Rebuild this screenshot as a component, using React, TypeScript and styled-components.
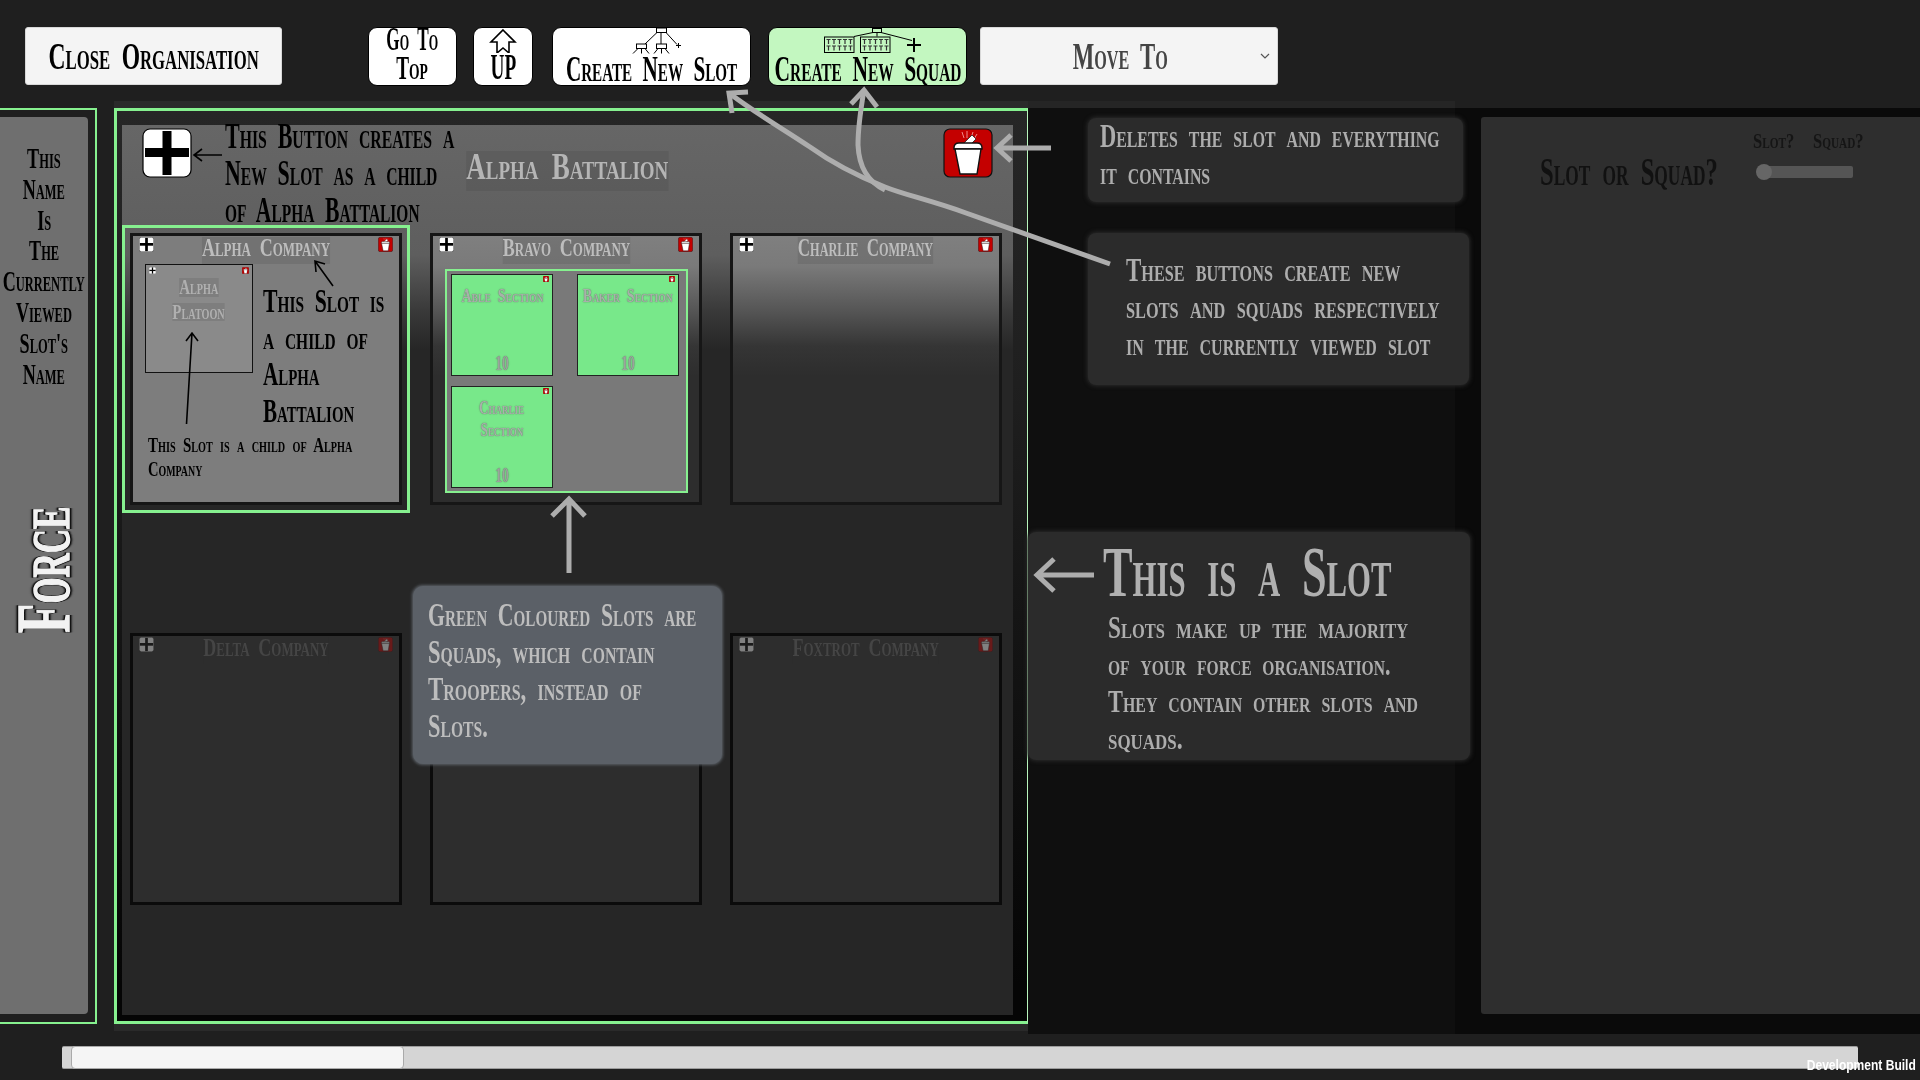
import type { ReactNode } from "react";
import styled, { createGlobalStyle } from "styled-components";

const green = "#86f08f";

const GlobalStyle = createGlobalStyle`
  html, body {
    margin: 0;
    padding: 0;
    background: #1f1f1f;
    overflow: hidden;
  }
`;

const Label = styled.span<{ $size: number; $sx: number; $color?: string; $origin?: string; $shade?: boolean; $glow?: boolean }>`
  display: inline-block;
  font-family: "Liberation Serif", "Times New Roman", serif;
  font-variant: small-caps;
  font-weight: 700;
  white-space: nowrap;
  word-spacing: 0.24em;
  font-size: ${(p) => p.$size}px;
  line-height: 0.85;
  color: ${(p) => p.$color ?? "#000"};
  background: ${(p) => (p.$shade ? "rgba(50, 50, 50, 0.13)" : "transparent")};
  text-shadow: ${(p) => (p.$glow ? "0 0 1.5px #555" : "none")};
  transform: scaleX(${(p) => p.$sx});
  transform-origin: ${(p) => p.$origin ?? "center"};
`;

const Page = styled.div`
  position: relative;
  width: 1920px;
  height: 1080px;
  overflow: hidden;
  background: #1f1f1f;
`;

const TopBar = styled.div`
  display: flex;
  height: 74px;
  padding: 27px 0 0 25px;
  align-items: flex-start;
`;

const PlainButton = styled.div<{ $width: number; $gap: number; $inset?: number }>`
  display: flex;
  align-items: center;
  justify-content: center;
  box-sizing: border-box;
  position: relative;
  width: ${(p) => p.$width}px;
  height: 58px;
  margin-right: ${(p) => p.$gap}px;
  padding-right: ${(p) => p.$inset ?? 0}px;
  background: #f4f4f4;
  border: 1px solid #d8d8d8;
  border-radius: 3px;
`;

const ToolButton = styled.div<{ $width: number; $gap: number; $active?: boolean }>`
  display: flex;
  flex-direction: column;
  align-items: center;
  box-sizing: border-box;
  width: ${(p) => p.$width}px;
  height: 59px;
  margin-right: ${(p) => p.$gap}px;
  background: ${(p) => (p.$active ? "#c3f7c0" : "#fff")};
  border: 1.5px solid #000;
  border-radius: 9px;
`;

const ToolRow = styled.div<{ $top?: number }>`
  display: flex;
  justify-content: center;
  width: 100%;
  height: 29px;
  align-items: center;
  margin-top: ${(p) => p.$top ?? 0}px;
`;

const IconSlot = styled.svg<{ $shift?: number }>`
  display: block;
  flex: none;
  margin-left: ${(p) => p.$shift ?? 0}px;
`;

const Workspace = styled.div`
  display: flex;
  height: 933px;
`;

const SideColumn = styled.div`
  width: 97px;
  height: 916px;
  margin: 7px 17px 0 0;
  box-sizing: border-box;
  border: solid ${green};
  border-width: 2.5px 2.5px 2.5px 0;
  padding-top: 7px;
`;

const SideInner = styled.div`
  display: flex;
  flex-direction: column;
  align-items: center;
  width: 88px;
  height: 897px;
  padding-top: 26px;
  box-sizing: border-box;
  background: #6f6f6f;
  border-radius: 0 4px 4px 0;
`;

const SideLine = styled.div`
  height: 30.8px;
  display: flex;
  align-items: center;
  justify-content: center;
  width: 88px;
`;

const ForceWord = styled.div`
  margin: 81px 3px 0 0;
  font-family: "Liberation Serif", serif;
  font-variant: small-caps;
  font-weight: 700;
  font-size: 76px;
  line-height: 1;
  writing-mode: vertical-rl;
  color: #f2f2f2;
  -webkit-text-stroke: 1.5px #f2f2f2;
  filter: drop-shadow(0 0 1px #000) drop-shadow(0 0 1px #000) drop-shadow(0 0 1px #000);
  transform: rotate(180deg) scaleY(0.633);
`;

const MainBand = styled.div`
  width: 914px;
  height: 930px;
  padding-top: 7px;
  box-sizing: border-box;
  background: #2a2a2a;
`;

const MainFrame = styled.div`
  width: 914px;
  height: 916px;
  box-sizing: border-box;
  border: solid ${green};
  border-width: 3px 1.5px 3px 3px;
  border-right-color: #b8f5bc;
  padding: 14px 14px 6px 5px;
  background: linear-gradient(#262626, #1f1f1f 30%, #050505 96%);
`;

const MainInner = styled.div`
  height: 890px;
  background: linear-gradient(#666 0, #5e5e5e 130px, #3a3a3a 185px, #262626 225px, #262626 100%);
`;

const PanelHeader = styled.div`
  display: grid;
  grid-template-columns: 1fr auto 1fr;
  height: 108px;
  padding: 3px 20px 0;
  box-sizing: border-box;
`;

const HeaderTitle = styled.div`
  display: flex;
  justify-content: center;
  padding: 23px 1px 0 0;
  height: 40px;
`;

const HeaderEnd = styled.div`
  display: flex;
  justify-content: flex-end;
`;

const SlotGrid = styled.div`
  display: grid;
  grid-template-columns: repeat(3, 272px);
  grid-auto-rows: 272px;
  column-gap: 28px;
  row-gap: 128px;
  margin-left: 8px;
`;

const Card = styled.div<{ $tone: "selected" | "faded" | "dim" }>`
  box-sizing: border-box;
  border: 3px solid ${(p) => (p.$tone === "dim" ? "#0b0b0b" : "#161616")};
  outline: ${(p) => (p.$tone === "selected" ? `3px solid ${green}` : "none")};
  outline-offset: 5px;
  background: ${(p) =>
    p.$tone === "selected"
      ? "#7d7d7d"
      : p.$tone === "faded"
        ? "linear-gradient(#7f7f7f 0, #7a7a7a 30px, #555 75px, #353535 110px, #2d2d2d 140px)"
        : "#2d2d2d"};
`;

const CardHeader = styled.div`
  display: grid;
  grid-template-columns: 15px 1fr 15px;
  height: 27px;
  padding: 1px 6px 0;
`;

const CardTitle = styled.div`
  display: flex;
  justify-content: center;
`;

const DimWrap = styled.div<{ $dim: boolean }>`
  opacity: ${(p) => (p.$dim ? 0.4 : 1)};
`;

const CardBody = styled.div<{ $top: number }>`
  padding: ${(p) => p.$top}px 0 0 12px;
`;

const MiniSlot = styled.div`
  width: 108px;
  height: 109px;
  box-sizing: border-box;
  border: 1px solid #111;
  background: #8a8a8a;
`;

const MiniIcons = styled.div`
  display: flex;
  justify-content: space-between;
  padding: 2px 3px;
`;

const MiniLines = styled.div`
  display: flex;
  flex-direction: column;
  align-items: center;
  padding-top: 2px;
  gap: 6px;
`;

const SquadBox = styled.div`
  display: grid;
  grid-template-columns: repeat(2, 102px);
  grid-auto-rows: 102px;
  column-gap: 24px;
  row-gap: 10px;
  width: 243px;
  height: 224px;
  box-sizing: border-box;
  padding: 3px 4px;
  border: 2.5px solid ${green};
  background: #797979;
`;

const SquadCard = styled.div`
  display: flex;
  flex-direction: column;
  align-items: center;
  box-sizing: border-box;
  border: 1.5px solid #222;
  background: #78e88a;
`;

const SquadTrash = styled.div`
  align-self: flex-end;
  height: 7px;
  margin: 1px 3px 0 0;
`;

const SquadLabel = styled.div`
  display: flex;
  flex-direction: column;
  align-items: center;
  gap: 6px;
  padding-top: 5px;
`;

const SquadCount = styled.div`
  margin-top: auto;
  padding-bottom: 1px;
`;

const RightRegion = styled.div`
  display: flex;
  flex: 1;
  height: 933px;
  background:
    linear-gradient(#252525, #252525) 0 0 / 427px 7px no-repeat,
    linear-gradient(#1f1f1f, #1f1f1f) 0 0 / 100% 7px no-repeat,
    linear-gradient(to right, #0f0f0f 427px, #0a0a0a 427px);
`;

const InfoColumn = styled.div`
  display: flex;
  flex-direction: column;
  align-items: flex-start;
  width: 453px;
  padding-top: 17px;
`;

const InfoBox = styled.div<{ $left: number; $top: number; $width: number; $height: number; $pad: string }>`
  box-sizing: border-box;
  margin: ${(p) => p.$top}px 0 0 ${(p) => p.$left}px;
  width: ${(p) => p.$width}px;
  height: ${(p) => p.$height}px;
  padding: ${(p) => p.$pad};
  background: #2b2b2b;
  border-radius: 8px;
  box-shadow: 0 0 4px 1px #2b2b2b;
`;

const SlotInfoBody = styled.div`
  margin: 6px 0 0 5px;
`;

const TextLine = styled.div<{ $height?: number }>`
  display: flex;
  align-items: center;
  height: ${(p) => p.$height ?? 37}px;
`;

const SettingsPanel = styled.div`
  position: relative;
  flex: 1;
  height: 897px;
  margin-top: 16px;
  background: #2e2e2e;
  border-radius: 3px 0 0 3px;
`;

const SlotSquadRow = styled.div`
  display: flex;
  align-items: center;
  padding: 39px 0 0 59px;
  height: 30px;
`;

const ToggleColumn = styled.div`
  position: absolute;
  left: 272px;
  top: 15px;
  width: 120px;
`;

const ToggleLabels = styled.div`
  display: grid;
  grid-template-columns: 60px auto;
  height: 22px;
`;

const ToggleTrack = styled.div`
  position: relative;
  width: 93px;
  height: 12px;
  margin: 12px 0 0 7px;
  background: #555;
  border-radius: 2px;
`;

const ToggleThumb = styled.div`
  position: absolute;
  left: -4px;
  top: -2px;
  width: 16px;
  height: 16px;
  border-radius: 50%;
  background: #666;
`;

const ScrollTrack = styled.div`
  position: relative;
  width: 1796px;
  height: 23px;
  margin: 12px 0 0 62px;
  box-sizing: border-box;
  background: #d5d5d5;
  border: solid #9c9c9c;
  border-width: 1px 0;
  border-radius: 2px;
`;

const ScrollThumb = styled.div`
  position: absolute;
  left: 9px;
  top: -1px;
  width: 333px;
  height: 23px;
  box-sizing: border-box;
  background: #f5f5f5;
  border: 1px solid #aaa;
  border-radius: 4px;
`;

const DevBuild = styled.div`
  position: absolute;
  right: 4px;
  bottom: 7px;
  font-family: "Liberation Sans", Arial, sans-serif;
  font-weight: 700;
  font-size: 14px;
  color: #fff;
  white-space: nowrap;
  transform: scaleX(0.86);
  transform-origin: right;
`;

const Note = styled.div<{ $x: number; $y: number }>`
  position: absolute;
  left: ${(p) => p.$x}px;
  top: ${(p) => p.$y}px;
`;

const TipBox = styled.div`
  position: absolute;
  left: 413px;
  top: 586px;
  width: 309px;
  height: 178px;
  box-sizing: border-box;
  padding: 11px 0 0 15px;
  background: #5b6067;
  border-radius: 10px;
  box-shadow: 0 0 3px 1px #5b6067;
`;

const Overlay = styled.svg`
  position: absolute;
  left: 0;
  top: 0;
  pointer-events: none;
`;

function PlusIcon({ size }: { size: number }) {
  return (
    <IconSlot width={size} height={size} viewBox="0 0 50 50">
      <rect x="1" y="1" width="48" height="48" rx="7" fill="#fff" stroke="#000" strokeWidth="1.2" />
      <rect x="20.5" y="3" width="9" height="44" fill="#000" />
      <rect x="3" y="20" width="44" height="9" fill="#000" />
    </IconSlot>
  );
}

function TrashIcon({ size }: { size: number }) {
  return (
    <IconSlot width={size} height={size} viewBox="0 0 50 50">
      <rect x="1" y="1" width="48" height="48" rx="6" fill="#c40000" stroke="#111" strokeWidth="1.2" />
      <path d="M19 4l2 6M24 3v7M30 4l-2 6M34 6l-3 5" stroke="#e88" strokeWidth="1" fill="none" />
      <path d="M19 17L29 7l4 4-9 9z" fill="#fff" stroke="#222" strokeWidth="0.8" />
      <path d="M11 20c0-3 2-5 5-5h18c3 0 5 2 5 5v1H11z" fill="#fff" stroke="#111" strokeWidth="1.4" />
      <path d="M12 21h26l-4 25H17z" fill="#fff" stroke="#111" strokeWidth="1.4" />
    </IconSlot>
  );
}

function SlotIcon() {
  return (
    <IconSlot $shift={12} width="55" height="27" viewBox="0 1.5 55 27" fill="none" stroke="#000" strokeWidth="1">
      <rect x="26.5" y="1.5" width="10" height="4.5" fill="#fff" />
      <path d="M27 6L15 17.5M31 6v11.5M36 6l11 12" />
      <rect x="6.5" y="17.5" width="10" height="4.5" fill="#fff" />
      <rect x="26.5" y="17.5" width="10" height="4.5" fill="#fff" />
      <path d="M8 22l-5 5M11.5 22v5M15 22l4 5M28 22l-4 5M31.5 22v5M35 22l4 5" />
      <path d="M46 19h5M48.5 16.5v5" />
    </IconSlot>
  );
}

const TROOP_X = [4, 9.5, 15, 20.5, 26];

function TroopBox({ x }: { x: number }) {
  return (
    <g transform={`translate(${x} 11)`}>
      <rect x="0.5" y="0.5" width="29.5" height="15.5" fill="none" stroke="#000" />
      {[3, 9.5].map((y) =>
        TROOP_X.map((tx) => (
          <path key={`${tx}-${y}`} d={`M${tx - 1.5} ${y}h4M${tx + 0.5} ${y}v4.5`} stroke="#333" strokeWidth="1.2" />
        ))
      )}
    </g>
  );
}

function SquadIcon() {
  return (
    <IconSlot $shift={7} width="102" height="27" viewBox="0 2.5 102 27" fill="none">
      <TroopBox x={4} />
      <TroopBox x={40} />
      <rect x="52.5" y="3" width="9" height="4" stroke="#000" />
      <path d="M53 7L34 11M57 7V11M61 7L92 15" stroke="#000" />
      <path d="M87 19.5h14M94 12.5v14" stroke="#000" strokeWidth="2" />
    </IconSlot>
  );
}

function Lines({ lines, x, y, size, height }: {
  lines: [string, number][];
  x: number;
  y: number;
  size: number;
  height?: number;
}) {
  return (
    <Note $x={x} $y={y}>
      {lines.map(([text, sx]) => (
        <TextLine key={text} $height={height}>
          <Label $size={size} $sx={sx} $origin="left">
            {text}
          </Label>
        </TextLine>
      ))}
    </Note>
  );
}

function Copy({ text, size, sx, color = "#adadad", height }: {
  text: string;
  size: number;
  sx: number;
  color?: string;
  height?: number;
}) {
  return (
    <TextLine $height={height}>
      <Label $size={size} $sx={sx} $color={color} $origin="left">{text}</Label>
    </TextLine>
  );
}

function Dimmed({ on, children }: { on: boolean; children: ReactNode }) {
  return <DimWrap $dim={on}>{children}</DimWrap>;
}

type SlotCard = { name: string; sx: number; tone: "selected" | "faded" | "dim" };

const slotCards: SlotCard[] = [
  { name: "Alpha Company", sx: 0.72, tone: "selected" },
  { name: "Bravo Company", sx: 0.72, tone: "faded" },
  { name: "Charlie Company", sx: 0.68, tone: "faded" },
  { name: "Delta Company", sx: 0.72, tone: "dim" },
  { name: "Echo Company", sx: 0.72, tone: "dim" },
  { name: "Foxtrot Company", sx: 0.72, tone: "dim" },
];

const squads = [
  { lines: ["Able Section"], sx: 0.74 },
  { lines: ["Baker Section"], sx: 0.74 },
  { lines: ["Charlie", "Section"], sx: 0.69 },
];

function SlotCardView({ card, index }: { card: SlotCard; index: number }) {
  const dim = card.tone === "dim";
  return (
    <Card $tone={card.tone}>
      <CardHeader>
        <Dimmed on={dim}>
          <PlusIcon size={15} />
        </Dimmed>
        <CardTitle>
          {index !== 4 && (
            <Label $size={25} $sx={card.sx} $color={dim ? "#454545" : "#bdbdbd"} $shade>
              {card.name}
            </Label>
          )}
        </CardTitle>
        <Dimmed on={dim}>
          <TrashIcon size={15} />
        </Dimmed>
      </CardHeader>
      {index === 0 && (
        <CardBody $top={0}>
          <MiniSlot>
            <MiniIcons>
              <PlusIcon size={7} />
              <TrashIcon size={7} />
            </MiniIcons>
            <MiniLines>
              <Label $size={22} $sx={0.68} $color="#b0b0b0" $shade>Alpha</Label>
              <Label $size={22} $sx={0.68} $color="#b0b0b0" $shade>Platoon</Label>
            </MiniLines>
          </MiniSlot>
        </CardBody>
      )}
      {index === 1 && (
        <CardBody $top={5}>
          <SquadBox>
            {squads.map((squad) => (
              <SquadCard key={squad.lines[0]}>
                <SquadTrash>
                  <TrashIcon size={6} />
                </SquadTrash>
                <SquadLabel>
                  {squad.lines.map((line) => (
                    <Label key={line} $size={19} $sx={squad.sx} $color="#a8b2aa" $glow>
                      {line}
                    </Label>
                  ))}
                </SquadLabel>
                <SquadCount>
                  <Label $size={22} $sx={0.62} $color="#9aa69c" $glow>10</Label>
                </SquadCount>
              </SquadCard>
            ))}
          </SquadBox>
        </CardBody>
      )}
    </Card>
  );
}

export default function App() {
  const sideLines = ["This", "Name", "Is", "The", "Currently", "Viewed", "Slot's", "Name"];

  return (
    <Page>
      <GlobalStyle />
      <TopBar>
        <PlainButton $width={257} $gap={86}>
          <Label $size={38} $sx={0.62}>Close Organisation</Label>
        </PlainButton>
        <ToolButton $width={89} $gap={16}>
          <ToolRow $top={-3}><Label $size={34} $sx={0.505}>Go To</Label></ToolRow>
          <ToolRow><Label $size={34} $sx={0.565}>Top</Label></ToolRow>
        </ToolButton>
        <ToolButton $width={60} $gap={19}>
          <IconSlot width="30" height="25" viewBox="0 1 30 25" fill="#fff" stroke="#000" strokeWidth="1.6">
            <path d="M15 3L27 15H21V26L15 21L9 26V15H3z" />
          </IconSlot>
          <ToolRow><Label $size={35} $sx={0.55}>UP</Label></ToolRow>
        </ToolButton>
        <ToolButton $width={199} $gap={17}>
          <SlotIcon />
          <ToolRow><Label $size={35} $sx={0.605}>Create New Slot</Label></ToolRow>
        </ToolButton>
        <ToolButton $width={199} $gap={13} $active>
          <SquadIcon />
          <ToolRow><Label $size={35} $sx={0.615}>Create New Squad</Label></ToolRow>
        </ToolButton>
        <PlainButton $width={298} $gap={0} $inset={17}>
          <Label $size={38} $sx={0.6} $color="#444">Move To</Label>
        </PlainButton>
      </TopBar>

      <Workspace>
        <SideColumn>
          <SideInner>
            {sideLines.map((line, i) => (
              <SideLine key={i}>
                <Label $size={29} $sx={0.624}>{line}</Label>
              </SideLine>
            ))}
            <ForceWord>Force</ForceWord>
          </SideInner>
        </SideColumn>

        <MainBand>
          <MainFrame>
            <MainInner>
              <PanelHeader>
                <PlusIcon size={50} />
                <HeaderTitle>
                  <Label $size={37} $sx={0.73} $color="#b5b5b5" $shade>Alpha Battalion</Label>
                </HeaderTitle>
                <HeaderEnd>
                  <TrashIcon size={50} />
                </HeaderEnd>
              </PanelHeader>
              <SlotGrid>
                {slotCards.map((card, i) => (
                  <SlotCardView key={card.name} card={card} index={i} />
                ))}
              </SlotGrid>
            </MainInner>
          </MainFrame>
        </MainBand>

        <RightRegion>
          <InfoColumn>
            <InfoBox $left={60} $top={0} $width={375} $height={84} $pad="0 0 0 12px">
              <Copy text="Deletes the slot and everything" size={34} sx={0.66} />
              <Copy text="it contains" size={34} sx={0.66} />
            </InfoBox>
            <InfoBox $left={60} $top={31} $width={381} $height={152} $pad="19px 0 0 38px">
              <Copy text="These buttons create new" size={34} sx={0.675} />
              <Copy text="slots and squads respectively" size={34} sx={0.68} />
              <Copy text="in the currently viewed slot" size={34} sx={0.665} />
            </InfoBox>
            <InfoBox $left={0} $top={147} $width={442} $height={228} $pad="10px 0 0 75px">
              <Copy text="This is a Slot" size={72} sx={0.615} color="#b0b0b0" height={62} />
              <SlotInfoBody>
                <Copy text="Slots make up the majority" size={31} sx={0.749} />
                <Copy text="of your force organisation." size={31} sx={0.708} />
                <Copy text="They contain other slots and" size={31} sx={0.722} />
                <Copy text="squads." size={31} sx={0.77} />
              </SlotInfoBody>
            </InfoBox>
          </InfoColumn>
          <SettingsPanel>
            <SlotSquadRow>
              <Label $size={41} $sx={0.6} $color="#111" $origin="left">Slot or Squad?</Label>
            </SlotSquadRow>
            <ToggleColumn>
              <ToggleLabels>
                <Label $size={22} $sx={0.75} $color="#151515" $origin="left">Slot?</Label>
                <Label $size={22} $sx={0.75} $color="#151515" $origin="left">Squad?</Label>
              </ToggleLabels>
              <ToggleTrack>
                <ToggleThumb />
              </ToggleTrack>
            </ToggleColumn>
          </SettingsPanel>
        </RightRegion>
      </Workspace>

      <ScrollTrack>
        <ScrollThumb />
      </ScrollTrack>

      <Lines
        x={225}
        y={118}
        size={35}
        lines={[["This Button creates a", 0.63], ["New Slot as a child", 0.625], ["of Alpha Battalion", 0.618]]}
      />
      <Lines
        x={263}
        y={283}
        size={34}
        height={36.7}
        lines={[["This Slot is", 0.64], ["a child of", 0.645], ["Alpha", 0.62], ["Battalion", 0.62]]}
      />
      <Lines
        x={148}
        y={433}
        size={22}
        height={24}
        lines={[["This Slot is a child of Alpha", 0.68], ["Company", 0.66]]}
      />

      <TipBox>
        <Copy text="Green Coloured Slots are" size={33} sx={0.66} color="#bdbdbd" />
        <Copy text="Squads, which contain" size={33} sx={0.685} color="#bdbdbd" />
        <Copy text="Troopers, instead of" size={33} sx={0.695} color="#bdbdbd" />
        <Copy text="Slots." size={33} sx={0.68} color="#bdbdbd" />
      </TipBox>

      <Overlay width="1920" height="1080" viewBox="0 0 1920 1080" fill="none">
        {/* thin black annotation arrows */}
        <g stroke="#000" strokeWidth="1.6">
          <path d="M222 155H194M202 149l-8 6 8 6" />
          <path d="M333 286L315 261M325 264l-10-3 1 11" />
          <path d="M186.5 424L192 333M186 341l6-8 6 8" />
        </g>
        {/* grey pointers */}
        <g stroke="#adadad" strokeWidth="5">
          <path d="M1110 264L966 213C930 200 905 195 885 187C860 177 835 165 810 147C785 130 755 113 729 93" />
          <path d="M748 92L729 93L732 113" />
          <path d="M885 190C868 182 859 168 858 145C858 125 861 108 864 90" />
          <path d="M851 104L864 90L877 107" />
          <path d="M1051 148H997M1011 135L997 148L1011 161" />
          <path d="M569 573V499M552 516L569 499L585 516" />
          <path d="M1094 575H1037M1054 559L1037 575L1054 591" />
        </g>
        <path d="M1261 54l4 4 4-4" stroke="#555" strokeWidth="1.2" />
      </Overlay>

      <DevBuild>Development Build</DevBuild>
    </Page>
  );
}
